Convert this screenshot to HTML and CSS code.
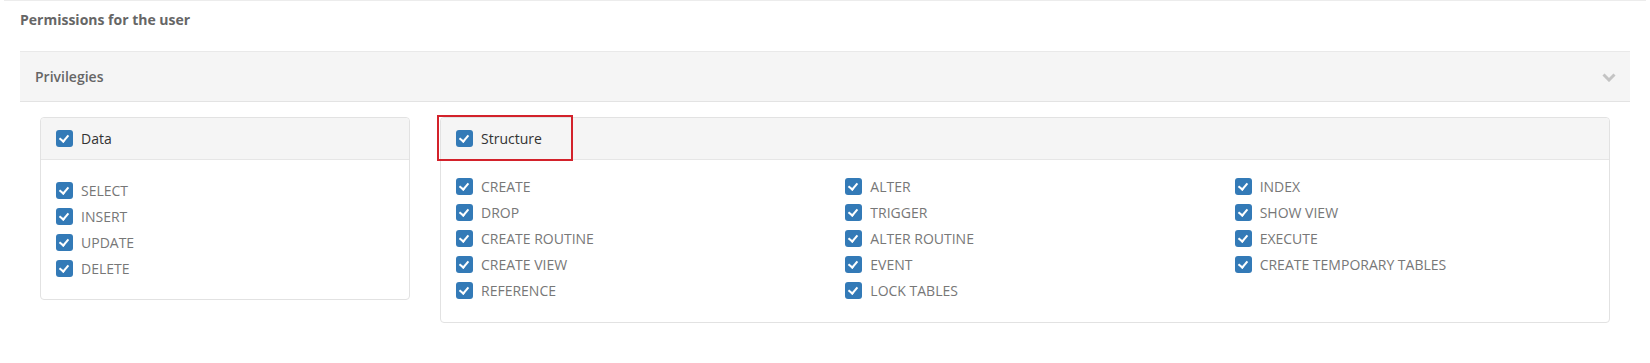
FILE: index.html
```html
<!DOCTYPE html>
<html>
<head>
<meta charset="utf-8">
<link rel="stylesheet" href="styles.css">
</head>
<body>
<div class="page">
  <div class="title">Permissions for the user</div>
  <div class="accordion">
    <div class="acc-head">
      <span>Privilegies</span>
      <svg class="chev" width="14" height="9" viewBox="0 0 14 9"><polyline points="1.5,1.5 7,7 12.5,1.5" fill="none" stroke="#c4c4c4" stroke-width="3"/></svg>
    </div>
    <div class="acc-body">
      <div class="panel">
        <div class="panel-head"><span class="cb"></span><span>Data</span></div>
        <div class="panel-body data-body">
          <div class="item"><span class="cb"></span>SELECT</div>
          <div class="item"><span class="cb"></span>INSERT</div>
          <div class="item"><span class="cb"></span>UPDATE</div>
          <div class="item"><span class="cb"></span>DELETE</div>
        </div>
      </div>
      <div class="panel">
        <div class="panel-head"><span class="cb"></span><span>Structure</span><div class="highlight"></div></div>
        <div class="panel-body struct-body">
          <div class="col">
            <div class="item"><span class="cb"></span>CREATE</div>
            <div class="item"><span class="cb"></span>DROP</div>
            <div class="item"><span class="cb"></span>CREATE ROUTINE</div>
            <div class="item"><span class="cb"></span>CREATE VIEW</div>
            <div class="item"><span class="cb"></span>REFERENCE</div>
          </div>
          <div class="col">
            <div class="item"><span class="cb"></span>ALTER</div>
            <div class="item"><span class="cb"></span>TRIGGER</div>
            <div class="item"><span class="cb"></span>ALTER ROUTINE</div>
            <div class="item"><span class="cb"></span>EVENT</div>
            <div class="item"><span class="cb"></span>LOCK TABLES</div>
          </div>
          <div class="col">
            <div class="item"><span class="cb"></span>INDEX</div>
            <div class="item"><span class="cb"></span>SHOW VIEW</div>
            <div class="item"><span class="cb"></span>EXECUTE</div>
            <div class="item"><span class="cb"></span>CREATE TEMPORARY TABLES</div>
          </div>
        </div>
      </div>
    </div>
  </div>
</div>
</body>
</html>
```
FILE: styles.css
```css
* { box-sizing: border-box; }
html, body { margin: 0; padding: 0; background: #fff; }
body { font-family: "Open Sans", "Liberation Sans", sans-serif; font-size: 14px; }
.page {
  border-top: 1px solid #ececec;
  margin: 0 4px;
  padding: 0 16px;
}
.title {
  font-weight: 700;
  color: #666;
  line-height: 20px;
  padding-top: 9px;
  margin-bottom: 21px;
}
.acc-head {
  height: 51px;
  background: #f5f5f5;
  border-top: 1px solid #e9e9e9;
  border-bottom: 1px solid #e3e3e3;
  display: flex;
  align-items: center;
  justify-content: space-between;
  padding: 0 14px 0 15px;
  font-weight: 600;
  color: #666;
}
.chev { margin-top: 2px; }
.acc-body {
  display: grid;
  grid-template-columns: 370px 1fr;
  gap: 30px;
  align-items: start;
  padding: 15px 20px 0 20px;
}
.panel {
  border: 1px solid #e2e2e2;
  border-radius: 4px;
}
.panel-head {
  position: relative;
  height: 42px;
  background: #f5f5f5;
  border-bottom: 1px solid #e6e6e6;
  border-radius: 4px 4px 0 0;
  display: flex;
  align-items: center;
  padding-left: 15px;
  color: #333;
  gap: 8px;
}
.highlight {
  position: absolute;
  left: -4px;
  top: -3px;
  width: 136px;
  height: 46px;
  border: 2px solid #d3222b;
}
.cb {
  width: 17px;
  height: 17px;
  border-radius: 3px;
  background: #337ab7;
  flex: none;
  position: relative;
}
.cb::after {
  content: "";
  position: absolute;
  left: 5px;
  top: 3px;
  width: 4px;
  height: 7px;
  border: solid #fff;
  border-width: 0 2.5px 2.5px 0;
  transform: rotate(40deg);
}
.item {
  height: 26px;
  display: flex;
  align-items: center;
  gap: 8px;
  color: #777;
  padding-left: 15px;
}
.data-body { padding: 17px 0 18px 0; }
.struct-body {
  display: grid;
  grid-template-columns: repeat(3, 1fr);
  padding: 13px 0 19px 0;
}
```
